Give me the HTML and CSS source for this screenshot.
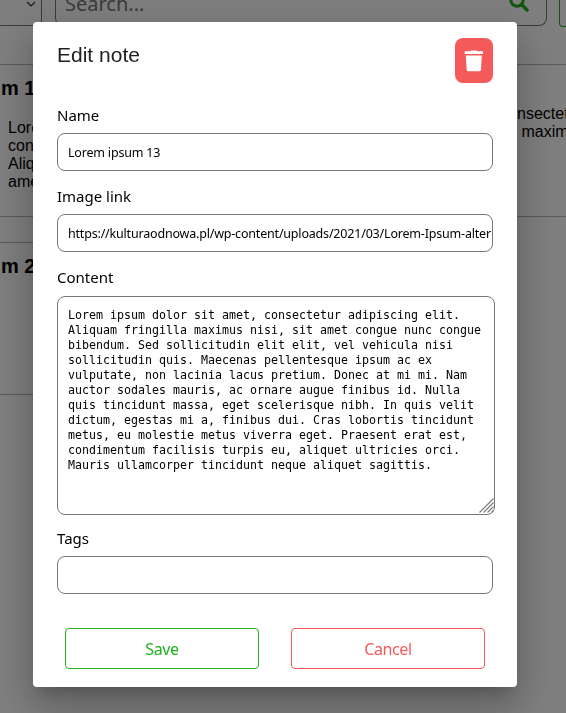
FILE: index.html
```html
<!DOCTYPE html>
<html lang="en">
<head>
<meta charset="utf-8">
<title>Edit note</title>
<link rel="stylesheet" href="styles.css">
</head>
<body>
<div class="page">
  <header class="toolbar">
    <div class="select"><svg width="10" height="6" viewBox="0 0 10 6"><path d="M1 1l4 4 4-4" fill="none" stroke="#333" stroke-width="1.2"/></svg></div>
    <div class="search"><span>Search...</span>
      <svg class="search-icon" width="20" height="20" viewBox="0 0 20 20"><circle cx="8" cy="8" r="6.2" fill="none" stroke="#20b020" stroke-width="3"/><path d="M12.5 12.5l5.5 5.5" stroke="#20b020" stroke-width="3.4" stroke-linecap="round"/></svg>
    </div>
    <div class="add"></div>
  </header>
  <main class="notes">
    <section class="note first">
      <h2>m 1</h2>
      <p class="excerpt">Lorem<br>cons<br>Aliqu<br>amet</p>
      <p class="excerpt side">nsectet<br>&nbsp;maxim</p>
    </section>
    <section class="note second"><h2>m 2</h2></section>
  </main>
</div>
<div class="overlay">
  <form class="dialog">
    <div class="heading">
      <h1>Edit note</h1>
      <button class="delete" type="button" aria-label="Delete"><svg width="20" height="22" viewBox="0 0 20 22" fill="#fff"><path d="M.6 2Q.6 1.300 1.300 1.300H6.400L7.200.4H12.400L13.200 1.300H18.300Q19 1.300 19 2V4H.6ZM1.800 5.400H17.800L17 19.800Q16.900 21.200 15.500 21.200H4.200Q2.800 21.200 2.700 19.800Z"/></svg></button>
    </div>
    <label class="field"><span class="name">Name</span><input value="Lorem ipsum 13"></label>
    <label class="field"><span class="name">Image link</span><input value="https://kulturaodnowa.pl/wp-content/uploads/2021/03/Lorem-Ipsum-alter"></label>
    <label class="field content"><span class="name">Content</span><textarea spellcheck="false">Lorem ipsum dolor sit amet, consectetur adipiscing elit.
Aliquam fringilla maximus nisi, sit amet congue nunc congue
bibendum. Sed sollicitudin elit elit, vel vehicula nisi
sollicitudin quis. Maecenas pellentesque ipsum ac ex
vulputate, non lacinia lacus pretium. Donec at mi mi. Nam
auctor sodales mauris, ac ornare augue finibus id. Nulla
quis tincidunt massa, eget scelerisque nibh. In quis velit
dictum, egestas mi a, finibus dui. Cras lobortis tincidunt
metus, eu molestie metus viverra eget. Praesent erat est,
condimentum facilisis turpis eu, aliquet ultricies orci.
Mauris ullamcorper tincidunt neque aliquet sagittis.</textarea>
      <svg class="grip" width="15" height="15" viewBox="0 0 15 15" fill="none" stroke="#777" stroke-width="1.1"><path d="M.5 14.5l14-14M4.5 14.5l10-10M8.500 14.500l6-6M12.500 14.500l2-2"/></svg>
    </label>
    <label class="field"><span class="name">Tags</span><input></label>
    <div class="actions">
      <button class="save" type="button">Save</button>
      <button class="cancel" type="button">Cancel</button>
    </div>
  </form>
</div>
</body>
</html>
```
FILE: styles.css
```css
* { box-sizing: border-box; }
body { margin: 0; height: 713px; overflow: hidden; background: #fff; font-family: "Noto Sans", sans-serif; }
.page { height: 713px; overflow: hidden; font-family: "Liberation Sans", Arial, sans-serif; }
.toolbar { height: 64px; display: flex; align-items: flex-start; }
.select { width: 42px; height: 26px; flex: none; border: solid #777; border-width: 0 1px 1px 0; display: flex; justify-content: flex-end; padding: 1px 5px 0 0; }
.search { width: 492px; height: 26px; flex: none; margin-left: 13px; padding: 0 17px 0 9px; border: 1px solid #777; border-top: 0; border-radius: 0 0 8px 8px; display: flex; justify-content: space-between; align-items: flex-start; font: 20px/24px "Noto Sans", sans-serif; color: #777; }
.search span { margin-top: -8px; }
.search-icon { margin-top: -8px; flex: none; }
.add { width: 40px; height: 27px; margin-left: 12px; flex: none; border: 1px solid #20b020; border-top: 0; border-radius: 0 0 4px 4px; }
.note { height: 153px; border: solid #b5b5b5; border-width: 1px 0; }
.note h2 { margin: -1px 0 0 1px; font-size: 20px; line-height: 24px; }
.first { display: grid; grid-template-columns: 517px 1fr; grid-template-rows: 41px 1fr; padding-top: 12px; }
.first h2 { grid-column: 1 / 3; }
.excerpt { margin: 1px 0 0 8px; font-size: 16px; line-height: 18px; white-space: nowrap; }
.side { margin: -13px 0 0; }
.second { width: 517px; margin-top: 25px; padding-top: 12px; }
.overlay { position: fixed; inset: 0; background: rgba(0, 0, 0, .5); display: flex; justify-content: center; align-items: flex-start; padding: 22px 16px 0 0; }
.dialog { width: 484px; height: 665px; padding: 16px 24px 18px; background: #fff; border-radius: 4px; box-shadow: 0 11px 15px -7px rgba(0,0,0,.2), 0 24px 38px 3px rgba(0,0,0,.14), 0 9px 46px 8px rgba(0,0,0,.12); }
.heading { display: flex; justify-content: space-between; height: 65px; }
h1 { margin: 1px 0 0; font: 400 21px/32px "Liberation Sans", Arial, sans-serif; color: #212121; }
.delete { width: 38px; height: 45px; padding: 0; border: 0; border-radius: 8px; background: #f55a5a; display: flex; align-items: center; justify-content: center; }
.field { display: block; height: 81px; }
.name { display: block; height: 30px; font-size: 15px; line-height: 24px; color: #000; }
input { display: block; width: 436px; height: 38px; border: 1px solid #777; border-radius: 8px; padding: 0 0 0 10px; margin: 0; background: #fff; color: #000; font: 12.5px "Noto Sans", sans-serif; letter-spacing: -.19px; outline: 0; }
.content { position: relative; height: 261px; }
.content .name { height: 31px; }
textarea { display: block; width: 438px; height: 219px; margin: 0; padding: 11px 10px 9px; border: 1px solid #777; border-radius: 8px; resize: none; overflow: hidden; white-space: pre; background: #fff; color: #000; font: 11.63px/15px "DejaVu Sans Mono", monospace; outline: 0; }
.grip { position: absolute; left: 422px; top: 233px; }
.actions { display: flex; gap: 32px; padding: 21px 8px 0; }
.actions button { width: 194px; height: 41px; padding: 0; border: 1px solid; border-radius: 4px; background: #fff; font: 16px "Noto Sans", sans-serif; letter-spacing: -.4px; }
.actions .save { border-color: #20b020; color: #20b020; }
.actions .cancel { border-color: #f55a5a; color: #f55a5a; }
```
